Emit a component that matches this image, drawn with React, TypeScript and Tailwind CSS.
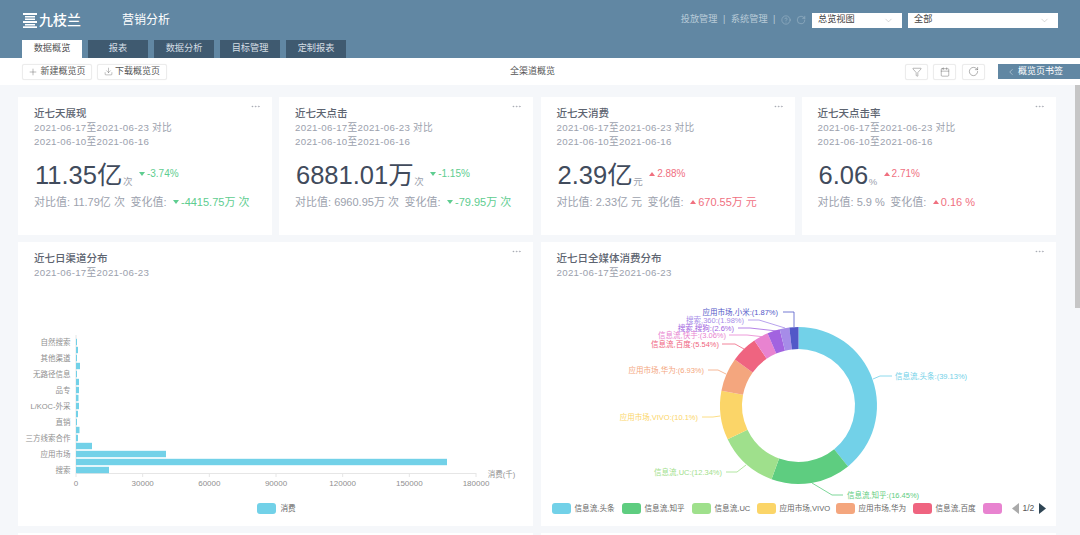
import { Calendar, ChevronDown, ChevronLeft, CircleHelp, Download, Funnel, MoreHorizontal, Plus, RotateCw } from "lucide-react";

const FONT = "font-['Liberation_Sans','Noto_Sans_CJK_SC',sans-serif]";

const tabs = ["数据概览", "报表", "数据分析", "目标管理", "定制报表"];

interface Kpi {
  title: string;
  value: string;
  unit: string;
  pct: string;
  base: string;
  delta: string;
  up: boolean;
}

const kpis: Kpi[] = [
  { title: "近七天展现", value: "11.35亿", unit: "次", pct: "-3.74%", base: "11.79亿 次", delta: "-4415.75万 次", up: false },
  { title: "近七天点击", value: "6881.01万", unit: "次", pct: "-1.15%", base: "6960.95万 次", delta: "-79.95万 次", up: false },
  { title: "近七天消费", value: "2.39亿", unit: "元", pct: "2.88%", base: "2.33亿 元", delta: "670.55万 元", up: true },
  { title: "近七天点击率", value: "6.06", unit: "%", pct: "2.71%", base: "5.9 %", delta: "0.16 %", up: true },
];

// widths in px at the chart scale, top row first
const bars = [1, 2, 1, 4, 1, 3, 3, 2.5, 3, 2, 1, 3.5, 2, 16, 90, 371, 33];
const barLabels = ["自然搜索", "其他渠道", "无路径信息", "品专", "L/KOC-外采", "直销", "三方线索合作", "应用市场", "搜索"];
const ticks = ["0", "30000", "60000", "90000", "120000", "150000", "180000"];

const slices = [
  { name: "信息流,头条", pct: 39.13, color: "#72d1e8", w: "w-[70px]" },
  { name: "信息流,知乎", pct: 16.45, color: "#5ecd80", w: "w-[70px]" },
  { name: "信息流,UC", pct: 12.34, color: "#9fe08c", w: "w-[65px]" },
  { name: "应用市场,VIVO", pct: 10.1, color: "#fbd568", w: "w-[79px]" },
  { name: "应用市场,华为", pct: 6.93, color: "#f4a67e", w: "w-[77px]" },
  { name: "信息流,百度", pct: 5.54, color: "#ef6480", w: "w-[70px]" },
  { name: "信息流,快手", pct: 3.06, color: "#e883d0", w: "" },
  { name: "搜索,搜狗", pct: 2.6, color: "#a263e0", w: "" },
  { name: "搜索,360", pct: 1.98, color: "#a68ce8", w: "" },
  { name: "应用市场,小米", pct: 1.87, color: "#5258c8", w: "" },
];

// leader lines and labels, coordinates inside the 515x245 donut svg
const callouts = [
  { i: 0, pts: "332,98 339,95 351,95", x: 354, y: 98, anchor: "start" },
  { i: 1, pts: "271,202 291,214 302,214", x: 306, y: 217, anchor: "start" },
  { i: 2, pts: "205,184 196,191 185,191", x: 181, y: 194, anchor: "end" },
  { i: 3, pts: "179,135 172,136 161,136", x: 157, y: 139, anchor: "end" },
  { i: 4, pts: "185,93 177,89 167,89", x: 163, y: 92, anchor: "end" },
  { i: 5, pts: "203,68 194,63 181,63", x: 178, y: 66, anchor: "end" },
  { i: 6, pts: "224,56 206,54 188,54", x: 185, y: 57, anchor: "end" },
  { i: 7, pts: "236,50 209,47 197,47", x: 193, y: 50, anchor: "end" },
  { i: 8, pts: "244,47 218,39 207,39", x: 203, y: 42, anchor: "end" },
  { i: 9, pts: "253,46 253,31 242,31", x: 237, y: 34, anchor: "end" },
];

function arcPath(cx: number, cy: number, r0: number, r1: number, from: number, to: number) {
  const point = (r: number, pct: number) => {
    const a = (pct / 100) * Math.PI * 2 - Math.PI / 2;
    return `${(cx + r * Math.cos(a)).toFixed(2)} ${(cy + r * Math.sin(a)).toFixed(2)}`;
  };
  const large = to - from > 50 ? 1 : 0;
  return `M${point(r1, from)} A${r1} ${r1} 0 ${large} 1 ${point(r1, to)} L${point(r0, to)} A${r0} ${r0} 0 ${large} 0 ${point(r0, from)} Z`;
}

function ToolButton({ children, className }: { children: React.ReactNode; className?: string }) {
  return (
    <button className={`flex h-[16px] items-center justify-center rounded-[2px] border border-[#ececec] bg-white text-[9px] text-[#555] shadow-[0_0_1px_rgba(0,0,0,0.08)] ${className ?? ""}`}>
      {children}
    </button>
  );
}

function Caret({ up }: { up: boolean }) {
  return (
    <svg width="6" height="4" viewBox="0 0 6 4" className="shrink-0">
      <path d={up ? "M3 0 L6 4 L0 4 Z" : "M0 0 L6 0 L3 4 Z"} fill={up ? "#f0707f" : "#5ecd90"} />
    </svg>
  );
}

function KpiCard({ kpi }: { kpi: Kpi }) {
  const tone = kpi.up ? "text-[#f0707f]" : "text-[#5ecd90]";
  return (
    <div className="relative h-[138px] w-[254px] shrink-0 bg-white pl-[16px] pt-[9px]">
      <MoreHorizontal size={11} strokeWidth={1} className="absolute right-[11px] top-[4px] text-[#8a8f99]" />
      <div className="text-[10.5px] leading-[15px] font-medium text-[#5d6470]">{kpi.title}</div>
      <div className="text-[9.7px] leading-[14px] tracking-[0.3px] text-[#9ba1ad]">2021-06-17至2021-06-23 对比</div>
      <div className="text-[9.7px] leading-[14px] tracking-[0.3px] text-[#9ba1ad]">2021-06-10至2021-06-16</div>
      <div className="mt-[8px] flex h-[36px] items-center pl-[1px]">
        <span className="text-[25.5px] leading-[36px] text-[#414b5c]">{kpi.value}</span>
        <span className="mt-[14px] ml-[0.5px] text-[9.5px] text-[#9ba1ad]">{kpi.unit}</span>
        <span className={`mb-[3px] ml-[6.5px] flex items-center gap-[2px] text-[10px] ${tone}`}>
          <Caret up={kpi.up} />
          {kpi.pct}
        </span>
      </div>
      <div className="mt-[1px] flex items-center text-[11px] leading-[16px] text-[#9ba1ad]">
        <span>对比值: {kpi.base}</span>
        <span className="ml-[5.5px]">变化值:</span>
        <span className={`ml-[6.5px] flex items-center gap-[2px] ${tone}`}>
          <Caret up={kpi.up} />
          {kpi.delta}
        </span>
      </div>
    </div>
  );
}

function ChartCard({ title, children }: { title: string; children: React.ReactNode }) {
  return (
    <div className="relative h-[284px] w-[515px] shrink-0 bg-white">
      <MoreHorizontal size={11} strokeWidth={1} className="absolute right-[11px] top-[4px] text-[#8a8f99]" />
      <div className="pl-[16px] pt-[9px]">
        <div className="text-[10.5px] leading-[15px] font-medium text-[#5d6470]">{title}</div>
        <div className="text-[9.7px] leading-[14px] tracking-[0.3px] text-[#9ba1ad]">2021-06-17至2021-06-23</div>
      </div>
      {children}
    </div>
  );
}

function BarChart() {
  return (
    <ChartCard title="近七日渠道分布">
      <svg width="515" height="245" viewBox="0 0 515 245" className="absolute left-0 top-[39px]">
        <line x1="58" y1="54" x2="58" y2="192.5" stroke="#e6e6e6" />
        <line x1="58" y1="192.5" x2="458" y2="192.5" stroke="#e6e6e6" />
        {bars.map((w, i) => (
          <rect key={i} x="58" y={57.8 + i * 8} width={w} height="6.4" fill="#72d1e8" />
        ))}
        {ticks.map((t, i) => {
          const x = 58 + (400 / 6) * i;
          return (
            <g key={t}>
              <line x1={x} y1="192" x2={x} y2="196" stroke="#e6e6e6" />
              <text x={x} y="205" textAnchor="middle" fontSize="8" fill="#8f8f8f">{t}</text>
            </g>
          );
        })}
        {barLabels.map((l, i) => (
          <text key={l} x="52.5" y={63.7 + i * 16} textAnchor="end" fontSize="7.5" fill="#8f8f8f">{l}</text>
        ))}
        <text x="483.5" y="195.5" textAnchor="middle" fontSize="7.5" fill="#8f8f8f">消费(千)</text>
      </svg>
      <div className="absolute left-0 right-0 top-[261px] flex items-center justify-center gap-[3px] pl-[2px] text-[7.6px] text-[#666]">
        <span className="h-[11px] w-[19px] rounded-[3px] bg-[#72d1e8]" />
        <span className="ml-[1px]">消费</span>
      </div>
    </ChartCard>
  );
}

function DonutChart() {
  let acc = 0;
  const arcs = slices.map((s) => {
    const from = acc;
    acc += s.pct;
    return { ...s, d: arcPath(257.5, 124.5, 56.5, 78.5, from, acc) };
  });
  return (
    <ChartCard title="近七日全媒体消费分布">
      <svg width="515" height="245" viewBox="0 0 515 245" className="absolute left-0 top-[39px]">
        {arcs.map((a) => (
          <path key={a.name} d={a.d} fill={a.color} />
        ))}
        {callouts.map((c) => (
          <g key={c.i}>
            <polyline points={c.pts} fill="none" stroke={slices[c.i].color} strokeWidth="0.8" />
            <text x={c.x} y={c.y} textAnchor={c.anchor as "start" | "end"} fontSize="7.5" fill={slices[c.i].color}>
              {`${slices[c.i].name}:(${slices[c.i].pct}%)`}
            </text>
          </g>
        ))}
      </svg>
      <div className="absolute left-[11px] top-[261px] flex h-[11px] items-center text-[7.6px] whitespace-nowrap text-[#666]">
        {slices.slice(0, 6).map((s) => (
          <div key={s.name} className={`flex shrink-0 items-center gap-[4px] ${s.w}`}>
            <span className="h-[11px] w-[19px] shrink-0 rounded-[3px]" style={{ background: s.color }} />
            <span>{s.name}</span>
          </div>
        ))}
        <span className="h-[11px] w-[19px] rounded-[3px] bg-[#e883d0]" />
        <svg width="7" height="11" viewBox="0 0 7 11" className="ml-[10px]">
          <path d="M7 0 V11 L0 5.5 Z" fill="#aaa" />
        </svg>
        <span className="ml-[4px] text-[8.5px] text-[#555]">1/2</span>
        <svg width="7" height="11" viewBox="0 0 7 11" className="ml-[5px]">
          <path d="M0 0 V11 L7 5.5 Z" fill="#2f4554" />
        </svg>
      </div>
    </ChartCard>
  );
}

export default function App() {
  return (
    <div className={`relative flex h-[535px] w-[1080px] flex-col overflow-hidden bg-[#f5f7fa] ${FONT}`}>
      <header className="flex h-[58px] shrink-0 flex-col bg-[#6187a3]">
        <div className="flex h-[40px] items-center">
          <div className="ml-[23px] flex items-center gap-[1px]">
            <svg width="15" height="15" viewBox="0 0 15 15" fill="#fff">
              <rect x="0" y="0" width="14" height="2" />
              <rect x="2" y="3" width="10" height="1.5" />
              <rect x="2" y="5.5" width="10" height="1.5" />
              <rect x="0" y="8" width="14" height="2" />
              <rect x="2" y="11" width="10" height="1.5" />
              <rect x="0" y="13.3" width="14" height="1.7" />
            </svg>
            <span className="text-[14px] leading-none font-medium text-white">九枝兰</span>
          </div>
          <span className="ml-[41px] text-[12px] text-white">营销分析</span>
          <div className="ml-auto flex items-center text-[9.2px] text-[#b9cbd8]">
            <span>投放管理</span>
            <span className="mx-[5.5px]">|</span>
            <span>系统管理</span>
            <span className="mx-[5.5px]">|</span>
            <CircleHelp size={10} strokeWidth={1} />
            <RotateCw size={10} strokeWidth={1} className="ml-[5px]" />
            <div className="ml-[6px] flex h-[15px] w-[90px] items-center justify-between bg-white pl-[6px] pr-[8px] text-[#444]">
              <span>总览视图</span>
              <ChevronDown size={11} strokeWidth={1} className="text-[#aaa]" />
            </div>
            <div className="ml-[6px] mr-[22px] flex h-[15px] w-[150px] items-center justify-between bg-white pl-[6px] pr-[8px] text-[#444]">
              <span>全部</span>
              <ChevronDown size={11} strokeWidth={1} className="text-[#aaa]" />
            </div>
          </div>
        </div>
        <nav className="ml-[22px] flex h-[18px] gap-[6px]">
          {tabs.map((t, i) => (
            <div
              key={t}
              className={`flex h-[18px] w-[60px] items-center justify-center text-[9.2px] ${i === 0 ? "bg-white text-[#555]" : "bg-[#3f5a70] text-[#d5dee5]"}`}
            >
              {t}
            </div>
          ))}
        </nav>
      </header>

      <div className="flex h-[27px] shrink-0 items-center bg-white pl-[22px]">
        <ToolButton className="w-[70px] gap-[2px]">
          <Plus size={10} strokeWidth={1} />
          新建概览页
        </ToolButton>
        <ToolButton className="ml-[5px] w-[70px] gap-[2px]">
          <Download size={9} strokeWidth={1} />
          下载概览页
        </ToolButton>
        <span className="ml-[343px] text-[9px] text-[#555]">全渠道概览</span>
        <ToolButton className="ml-[350px] w-[23px]">
          <Funnel size={10} strokeWidth={1} />
        </ToolButton>
        <ToolButton className="ml-[5px] w-[23px]">
          <Calendar size={10} strokeWidth={1} />
        </ToolButton>
        <ToolButton className="ml-[6px] w-[23px]">
          <RotateCw size={11} strokeWidth={1} />
        </ToolButton>
        <div className="ml-[13px] flex h-[15px] flex-1 items-center gap-[2px] bg-[#6187a3] pl-[8px] text-[9px] text-white">
          <ChevronLeft size={10} strokeWidth={1} />
          概览页书签
        </div>
      </div>

      <main className="flex flex-col gap-[7px] pl-[18px] pt-[12px]">
        <div className="flex gap-[7.5px]">
          <div className="flex w-[515px] gap-[7px]">
            {kpis.slice(0, 2).map((k) => (
              <KpiCard key={k.title} kpi={k} />
            ))}
          </div>
          <div className="flex w-[515px] gap-[7px]">
            {kpis.slice(2).map((k) => (
              <KpiCard key={k.title} kpi={k} />
            ))}
          </div>
        </div>
        <div className="flex gap-[7.5px]">
          <BarChart />
          <DonutChart />
        </div>
        <div className="flex gap-[7.5px]">
          <div className="h-[20px] w-[515px] bg-white" />
          <div className="h-[20px] w-[515px] bg-white" />
        </div>
      </main>

      {/* page scrollbar thumb */}
      <div className="absolute right-0 top-[85px] h-[223px] w-[5.5px] bg-[#c6c6c6]" />
    </div>
  );
}
